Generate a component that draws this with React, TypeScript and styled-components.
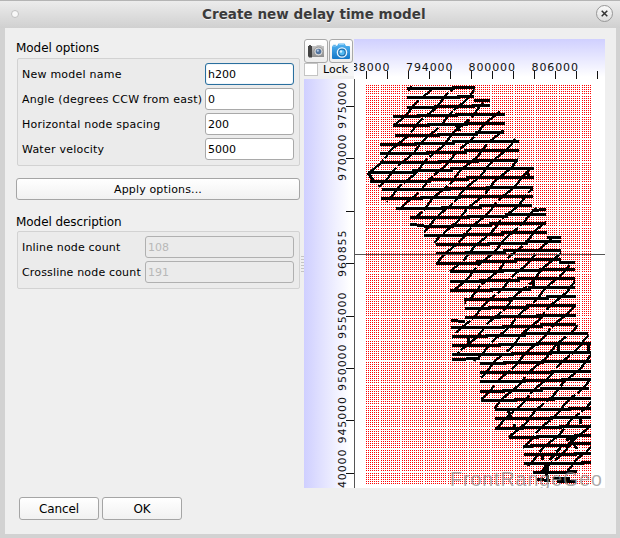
import React from "react";
import styled, { createGlobalStyle } from "styled-components";

const GlobalStyle = createGlobalStyle`
  html, body { margin: 0; padding: 0; }
  body { width: 620px; height: 538px; overflow: hidden; background: #d3d3d3; }
  * { box-sizing: border-box; }
`;

const Window = styled.div`
  width: 620px;
  height: 538px;
  display: flex;
  flex-direction: column;
  background: #d2d2d2;
  border-top: 1px solid #b4b4b4;
  font-family: "DejaVu Sans", sans-serif;
  font-size: 11px;
  color: #000;
`;

const TitleBar = styled.header`
  height: 27px;
  flex: none;
  display: grid;
  grid-template-columns: 30px 1fr 30px;
  align-items: center;
  justify-items: center;
  background: linear-gradient(#ececec, #d0d0d0);
`;

const MenuDot = styled.span`
  width: 8px;
  height: 8px;
  border-radius: 50%;
  background: #f8f8f8;
  border: 1px solid #c0c0c0;
  margin-top: -2px;
`;

const Title = styled.h1`
  margin: -1px 0 0 8px;
  width: 224px;
  font-size: 13.5px;
  line-height: 20px;
  font-weight: bold;
  letter-spacing: 0.04px;
  white-space: nowrap;
  color: #3b3b3b;
  text-shadow: 0 1px 0 #f4f4f4;
`;

const CloseButton = styled.button`
  width: 17px;
  height: 17px;
  padding: 0;
  margin: -2px 1px 0 0;
  display: grid;
  place-items: center;
  border-radius: 50%;
  border: 1px solid #979797;
  background: linear-gradient(#fafafa, #dedede);
`;

const Body = styled.main`
  flex: 1;
  margin: 0 4px 4px 5px;
  padding: 11px 11px 0 11px;
  background: #efefef;
  display: flex;
  flex-direction: column;
`;

const Columns = styled.div`
  display: flex;
  height: 449px;
`;

const FormColumn = styled.section`
  width: 284px;
  display: flex;
  flex-direction: column;
`;

const GroupTitle = styled.h2<{ $gap?: number }>`
  margin: ${(p) => p.$gap ?? 0}px 0 0;
  height: ${(p) => (p.$gap ? 18 : 19)}px;
  font-size: 12px;
  font-weight: normal;
  line-height: 18px;
  letter-spacing: -0.06px;
  white-space: nowrap;
`;

const Group = styled.div`
  margin-left: 1px;
  padding: 4px 5px 5px;
  border: 1px solid #d2d2d2;
  border-radius: 2px;
  background: #ebebeb;
  display: flex;
  flex-direction: column;
  gap: 3px;
`;

const Field = styled.label<{ $labelWidth: number; $track: number }>`
  display: grid;
  grid-template-columns: ${(p) => p.$labelWidth}px 1fr;
  height: 22px;
  line-height: 23px;
  margin-left: -1px;
  letter-spacing: ${(p) => p.$track}px;
  white-space: nowrap;
`;

const Input = styled.input`
  width: 100%;
  height: 22px;
  padding: 1px 2px 0;
  border: 1px solid #a9a9a9;
  border-radius: 3px;
  background: #fff;
  font: 11px "DejaVu Sans", sans-serif;
  color: #000;
  outline: none;
  &[data-active="true"] { border-color: #2a6f9e; box-shadow: inset 0 0 1px #6ea6cb; }
  &:disabled { background: #ebebeb; color: #b8b8b8; border-color: #b0b0b0; }
`;

const Button = styled.button<{ $large?: boolean }>`
  height: ${(p) => (p.$large ? 23 : 22)}px;
  width: ${(p) => (p.$large ? "80px" : "284px")};
  padding: ${(p) => (p.$large ? 0 : 1)}px 0 0;
  border: 1px solid #a5a5a5;
  border-radius: 3px;
  background: linear-gradient(#fff, #f1f1f1);
  font: ${(p) => (p.$large ? 12 : 11)}px "DejaVu Sans", sans-serif;
  letter-spacing: ${(p) => (p.$large ? "-0.1px" : "0.15px")};
  color: #000;
`;

const ApplyRow = styled.div`
  margin-top: 12px;
  height: 22px;
  display: flex;
`;

const Splitter = styled.div`
  width: 4px;
  display: flex;
  align-items: center;
  &::before {
    content: "";
    width: 3px;
    height: 17px;
    margin-left: 1px;
    background: radial-gradient(circle, #c4c4c4 0.6px, transparent 0.9px) 0 0 / 2px 3px;
  }
`;

const Viewer = styled.section`
  width: 301px;
  height: 449px;
  display: grid;
  grid-template-columns: 50px 1fr;
  grid-template-rows: 40px 1fr;
  background: #fff;
`;

const Corner = styled.div`
  display: flex;
  flex-direction: column;
  background: #efefef;
`;

const Tools = styled.div`
  display: flex;
  height: 24px;
  gap: 1px;
`;

const ToolButton = styled.button`
  width: 24px;
  height: 24px;
  padding: 0;
  display: grid;
  place-items: center;
  border: 1px solid #a9a9a9;
  border-radius: 3px;
  background: linear-gradient(#fff, #ededed);
`;

const LockLabel = styled.label`
  display: flex;
  align-items: center;
  gap: 5px;
  height: 13px;
  line-height: 13px;
  background: linear-gradient(90deg, #efefef 13px, #f6f6f6);
`;

const CheckBox = styled.span`
  width: 14px;
  height: 13px;
  background: #fff;
  border: 1px solid #c4c4c4;
`;

const TopAxis = styled.div`
  background: linear-gradient(#d0d0ff 0, #d6d6ff 5px, #fff 38px);
`;

const SideAxis = styled.div`
  background: linear-gradient(90deg, #cfcfff 0, #d6d6ff 7px, #fff 46px);
`;

const Plot = styled.div`
  background: #fff;
`;

const Drawing = styled.svg`
  display: block;
`;

const AxisText = styled.text`
  font: 11px "DejaVu Sans", sans-serif;
  letter-spacing: 0.9px;
  fill: #111;
`;

const Watermark = styled.text`
  font: 19.5px "Liberation Sans", sans-serif;
  letter-spacing: 1px;
  fill: #8c8c8c;
  fill-opacity: 0.72;
`;

const Footer = styled.footer`
  display: flex;
  gap: 3px;
  margin: 9px 0 0 3px;
`;

/* Node grid: positions advance by two pixels inside each block. */
const expand = (starts: number[], end: number) =>
  starts.flatMap((s, i) => {
    const stop = i + 1 < starts.length ? starts[i + 1] - 1 : end;
    const out: number[] = [];
    for (let v = s; v < stop; v += 2) out.push(v);
    return out;
  });

const nodeColumns = expand([366, 381, 402, 425, 448, 469, 492, 515, 536, 559, 582], 592);
const nodeRows = expand(
  [85, 96, 117, 140, 163, 184, 207, 228, 251, 274, 295, 318, 341, 362, 385, 406, 429, 450, 473],
  485
);

const columnBars = nodeColumns.map((x) => `M${x} 85h1v400h-1z`).join("");
const rowMask = nodeRows
  .map((y, i) => {
    const next = nodeRows[i + 1] ?? 486;
    return `M366 ${y + 1}h226v${next - y - 1}h-226z`;
  })
  .join("");

/* Shot lines: x1, y1, x2, y2. */
const shotLines: number[][] = [
  [407, 88, 475, 87], [407, 97, 474, 96], [407, 107, 490, 105], [393, 116, 505, 114],
  [393, 125, 505, 123], [395, 135, 504, 132], [380, 144, 519, 141], [380, 153, 519, 150],
  [380, 162, 518, 160], [368, 172, 534, 168], [370, 181, 534, 177], [382, 189, 533, 187],
  [381, 198, 533, 196], [396, 208, 532, 205], [410, 217, 546, 214], [424, 226, 546, 223],
  [424, 235, 547, 232], [436, 244, 561, 241], [436, 253, 561, 250], [436, 263, 561, 259],
  [450, 271, 575, 269], [450, 281, 575, 278], [450, 290, 575, 287], [464, 299, 576, 296],
  [465, 308, 576, 305], [465, 317, 576, 315], [451, 327, 576, 324], [452, 336, 588, 333],
  [452, 345, 591, 343], [452, 354, 591, 352], [480, 363, 591, 361], [480, 372, 591, 371],
  [480, 381, 591, 379], [480, 391, 589, 388], [481, 400, 591, 398], [495, 409, 591, 408],
  [495, 418, 591, 417], [495, 428, 591, 426], [509, 437, 591, 435], [523, 446, 591, 443],
  [524, 454, 591, 453], [524, 463, 591, 462], [535, 472, 577, 471],
];

const shortLines: number[][] = [
  [474, 100, 490, 100], [532, 210, 546, 209], [410, 224, 424, 225], [547, 237, 561, 237],
  [559, 262, 575, 262], [451, 320, 465, 321], [452, 359, 480, 358], [537, 479, 550, 480],
  [557, 481, 576, 481], [553, 478, 570, 478], [368, 172, 373, 180], [408, 90, 412, 86],
];

const outline =
  shotLines.map(([x, y]) => `${x},${y}`).join(" ") +
  " " +
  [...shotLines].reverse().map(([, , x, y]) => `${x},${y}`).join(" ");

const stepPath = ([x1, y1, x2, y2]: number[], i: number) => {
  const mid = Math.round(x1 + (x2 - x1) * (0.38 + 0.09 * (i % 3)));
  const my = Math.round((y1 + y2) / 2);
  return `M${x1} ${y1 + 0.5}H${mid - 18}V${my + 0.5}H${mid + 20}V${y2 + 0.5}H${x2}`;
};

/* Tie lines run from upper right to lower left, with small steps on the way. */
const tieLines = Array.from({ length: 26 }, (_, k) => {
  const c = 520 + k * 22.5;
  let d = "";
  for (let y = 86; y <= 480; y += 3) {
    const wob = Math.sin(y * 0.23 + k * 1.9) * 1.3;
    const x = c - y + wob;
    d += `${d ? "L" : "M"}${x.toFixed(1)} ${y}`;
  }
  return d;
});

const scraps =
  "M455 124l5 7M527 172l3 7M533 280v9M468 335v9M558 343v10M588 343v8M580 416v8M542 454v6M547 462v12M569 437l8 12M550 460l4-5M556 452l5-4M508 411l4 8M514 424v6M541 473l4-5M545 462l3 20M566 440l10-3";

const topTicks = [366, 387, 408, 429, 450, 471, 492, 513, 534, 555, 576, 597];
const sideTicks = [106, 158, 211, 263, 316, 368, 420, 473];
const topLabels: [string, number][] = [["788000", 343], ["794000", 406], ["800000", 468.5], ["806000", 531.5]];
const sideLabels: [string, number][] = [
  ["975000", 129], ["970000", 181], ["960855", 277], ["955000", 339],
  ["950000", 391], ["945000", 443.5], ["940000", 496],
];

const GrayCamera = () => (
  <svg width="20" height="18" viewBox="0 0 20 18">
    <defs>
      <linearGradient id="metal" x1="0" y1="0" x2="0" y2="1">
        <stop offset="0" stopColor="#c9c9c9" />
        <stop offset="1" stopColor="#8d8d8d" />
      </linearGradient>
    </defs>
    <path d="M6 4h4l1-1h4l1 1h2v11H6z" fill="url(#metal)" />
    <path d="M2 4h4v11.500H3L2 14z" fill="#424242" />
    <path d="M3 3h2v1H3z" fill="#555" />
    <circle cx="12.500" cy="9.500" r="4.500" fill="#d6d6d6" stroke="#8a8a8a" strokeWidth="0.800" />
    <circle cx="12.500" cy="9.500" r="2.800" fill="#52749e" />
    <circle cx="11.800" cy="8.700" r="1.100" fill="#b4cae6" />
  </svg>
);

const BlueCamera = () => (
  <svg width="20" height="20" viewBox="0 0 20 20">
    <defs>
      <linearGradient id="blue" x1="0" y1="0" x2="0" y2="1">
        <stop offset="0" stopColor="#56b5f2" />
        <stop offset="1" stopColor="#1177c8" />
      </linearGradient>
    </defs>
    <path d="M2 5h4l1.500-2.500h6L15 5h3q1 0 1 1v11q0 1-1 1H2q-1 0-1-1V6q0-1 1-1z" fill="url(#blue)" />
    <path d="M2 4h3v1H2zM8 3.500h5" fill="#116db8" stroke="#98d5fa" strokeWidth="0.800" />
    <circle cx="11" cy="11.500" r="4.600" fill="#1c6dac" stroke="#e8f5ff" strokeWidth="1.400" />
    <circle cx="11" cy="11.500" r="2.700" fill="#52b9f2" />
    <circle cx="10" cy="10.500" r="1.200" fill="#d5f1ff" />
  </svg>
);

const optionFields = [
  { label: "New model name", value: "h200", track: 0.23 },
  { label: "Angle (degrees CCW from east)", value: "0", track: 0.23 },
  { label: "Horizontal node spacing", value: "200", track: 0.23 },
  { label: "Water velocity", value: "5000", track: 0.23 },
];

const countFields = [
  { label: "Inline node count", value: "108", track: 0.17 },
  { label: "Crossline node count", value: "191", track: 0.17 },
];

export default function App() {
  return (
    <Window>
      <GlobalStyle />
      <TitleBar>
        <MenuDot />
        <Title>Create new delay time model</Title>
        <CloseButton aria-label="Close">
          <svg width="7" height="7" viewBox="0 0 7 7">
            <path d="M.7.7l5.600 5.600M6.300.7L.7 6.300" stroke="#333" strokeWidth="1.500" />
          </svg>
        </CloseButton>
      </TitleBar>
      <Body>
        <Columns>
          <FormColumn>
            <GroupTitle>Model options</GroupTitle>
            <Group>
              {optionFields.map((f, i) => (
                <Field key={f.label} $labelWidth={183} $track={f.track}>
                  {f.label}
                  <Input defaultValue={f.value} data-active={i === 0} />
                </Field>
              ))}
            </Group>
            <ApplyRow>
              <Button>Apply options...</Button>
            </ApplyRow>
            <GroupTitle $gap={13}>Model description</GroupTitle>
            <Group>
              {countFields.map((f) => (
                <Field key={f.label} $labelWidth={123} $track={f.track}>
                  {f.label}
                  <Input defaultValue={f.value} disabled />
                </Field>
              ))}
            </Group>
          </FormColumn>
          <Splitter />
          <Viewer>
            <Corner>
              <Tools>
                <ToolButton aria-label="Snapshot"><GrayCamera /></ToolButton>
                <ToolButton aria-label="Save view"><BlueCamera /></ToolButton>
              </Tools>
              <LockLabel><CheckBox />Lock</LockLabel>
            </Corner>
            <TopAxis>
              <Drawing width="251" height="40" viewBox="354 39 251 40">
                {topLabels.map(([t, x]) => (
                  <AxisText key={t} x={x} y={71}>{t}</AxisText>
                ))}
                <path d={topTicks.map((x) => `M${x} 71h1v8h-1z`).join("")} fill="#111" />
              </Drawing>
            </TopAxis>
            <SideAxis>
              <Drawing width="50" height="409" viewBox="304 79 50 409">
                {sideLabels.map(([t, y]) => (
                  <AxisText key={t} transform={`translate(346 ${y}) rotate(-90)`}>{t}</AxisText>
                ))}
                <path d={sideTicks.map((y) => `M346 ${y}h8v1h-8z`).join("")} fill="#111" />
              </Drawing>
            </SideAxis>
            <Plot>
              <Drawing width="251" height="409" viewBox="354 79 251 409">
                <g shapeRendering="crispEdges">
                  <path d={columnBars} fill="#f00" />
                  <path d={rowMask} fill="#fff" />
                  <clipPath id="survey"><polygon points={outline} /></clipPath>
                  <g fill="none" stroke="#000" strokeWidth="3">
                    {shotLines.map((l, i) => <path key={i} d={stepPath(l, i)} />)}
                    {shortLines.map(([a, b, c, d], i) => <path key={i} d={`M${a} ${b}.5L${c} ${d}.5`} />)}
                    <g clipPath="url(#survey)" strokeWidth="2.300">
                      {tieLines.map((d, i) => (
                        <path key={i} d={d} strokeDasharray="19 3 34 2" strokeDashoffset={i * 11} />
                      ))}
                    </g>
                    <path d={scraps} />
                  </g>
                  <path d="M354 79h1v409h-1z" fill="#555" />
                  <path d="M355 254h250v1H355z" fill="#555" />
                </g>
                <Watermark x={450} y={486}>FrontRangeGeo</Watermark>
              </Drawing>
            </Plot>
          </Viewer>
        </Columns>
        <Footer>
          <Button $large>Cancel</Button>
          <Button $large>OK</Button>
        </Footer>
      </Body>
    </Window>
  );
}
